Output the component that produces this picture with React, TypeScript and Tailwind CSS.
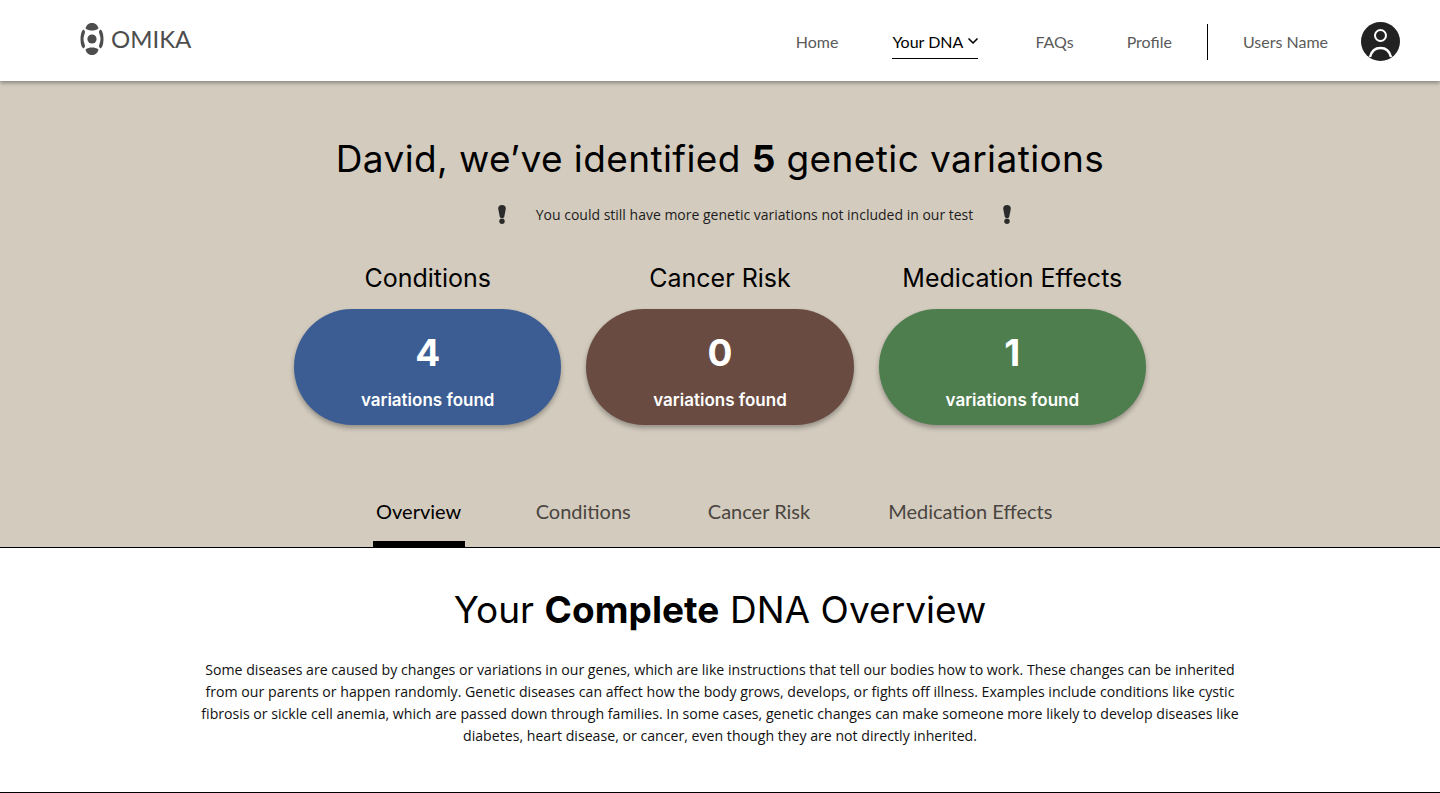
import { ChevronDown } from 'lucide-react';

const navFont = "font-['Lato',sans-serif]";
const headFont = "font-['Inter',sans-serif]";
const bodyFont = "font-['Open_Sans',sans-serif]";

const stats = [
    { title: 'Conditions', count: 4, color: 'bg-[#3b5d93]' },
    { title: 'Cancer Risk', count: 0, color: 'bg-[#694b41]' },
    { title: 'Medication Effects', count: 1, color: 'bg-[#4e7e4e]' },
];

const Logo = () => (
    <svg width="24" height="34" viewBox="0 0 24 34" fill="#4d4d4d">
        <circle cx="12" cy="17" r="4.6" />
        <path d="M5.5 6.5C6.5 2.5 9 1 12 1s5.500 1.500 6.500 5.500C16.500 8 14.500 8.500 12 8.500S7.500 8 5.500 6.500Z" />
        <path d="M5.500 27.500C6.500 31.500 9 33 12 33s5.500-1.500 6.500-5.500C16.500 26 14.500 25.500 12 25.500S7.500 26 5.500 27.500Z" />
        <path d="M3.200 7.500C4.600 8.300 5 9 5 10c0 1.500-1.500 4-1.500 7s1.500 5.500 1.500 7c0 1-.4 1.700-1.800 2.500C1.500 25 .5 21.500.5 17S1.500 9 3.200 7.500Z" />
        <path d="M20.800 7.500C19.400 8.300 19 9 19 10c0 1.500 1.500 4 1.500 7S19 22.500 19 24c0 1 .4 1.700 1.800 2.500 1.700-1.500 2.700-5 2.700-9.500s-1-8-2.700-9.500Z" />
    </svg>
);

const Avatar = () => (
    <svg width="39" height="39" viewBox="0 0 39 39" className="mt-px">
        <circle cx="19.500" cy="19.500" r="19.500" fill="#222222" />
        <circle cx="19.500" cy="13.500" r="5.500" fill="none" stroke="#ffffff" strokeWidth="2" />
        <path d="M9 35c1.500-6 5.500-9 10.500-9s9 3 10.500 9" fill="none" stroke="#ffffff" strokeWidth="2.500" />
    </svg>
);

const Bang = () => (
    <svg width="10" height="19" viewBox="0 0 10 19" fill="#2b2b2b">
        <path d="M5 0c2.400 0 4 1.500 3.800 3.800L7.300 11.500c-.2 1-1 1.500-2.300 1.500s-2.100-.5-2.300-1.500L1.200 3.800C1 1.500 2.600 0 5 0Z" />
        <circle cx="5" cy="16.300" r="2.700" />
    </svg>
);

export default function App() {
    return (
        <div className="h-[793px] bg-white overflow-hidden flex flex-col">
            {/* Top bar */}
            <header className={`relative z-10 h-[81px] shrink-0 bg-white shadow-[0_2px_4px_rgba(0,0,0,0.35)] flex items-center justify-between pl-[80px] pr-[40px] ${navFont}`}>
                <div className="flex items-center gap-[7px] -mt-[3px]">
                    <Logo />
                    <span className="text-[24px] leading-none text-[#4d4d4d]">OMIKA</span>
                </div>
                <nav className="flex items-center text-[16px] text-[#5a5a5a]">
                    <a className="mr-[54px] pt-[2px]">Home</a>
                    <a className="mr-[57px] mt-[4px] h-[33px] w-[86px] border-b border-black text-black flex items-start justify-between pt-[4px]">
                        Your DNA
                        <ChevronDown size={16} strokeWidth={2.5} className="mt-[3px] -mr-[3px]" />
                    </a>
                    <a className="mr-[53px] pt-[2px]">FAQs</a>
                    <a className="pt-[2px]">Profile</a>
                    <div className="w-px h-[36px] bg-black mx-[35px] mt-[2px]" />
                    <a className="mr-[33px] pt-[2px]">Users Name</a>
                    <Avatar />
                </nav>
            </header>

            {/* Summary */}
            <section className="h-[467px] shrink-0 bg-[#d3cbbe] border-b border-black flex flex-col items-center">
                <h1 className={`mt-[53px] text-[37px] leading-[50px] tracking-[0.4px] text-black ${headFont}`}>
                    David, we’ve identified <b className="font-bold">5</b> genetic variations
                </h1>
                <div className={`mt-[20px] ml-[69px] w-[515px] flex items-center justify-between text-[14px] text-[#1c1c1c] ${bodyFont}`}>
                    <Bang />
                    <span>You could still have more genetic variations not included in our test</span>
                    <Bang />
                </div>
                <div className="mt-[35px] flex gap-[25px]">
                    {stats.map((stat) => (
                        <div key={stat.title} className={`w-[267.33px] flex flex-col items-center ${headFont}`}>
                            <h2 className="text-[25px] leading-[36px] text-black whitespace-nowrap">{stat.title}</h2>
                            <div className={`mt-[13px] w-full h-[116px] rounded-[58px] ${stat.color} text-white flex flex-col items-center shadow-[0_3px_5px_rgba(0,0,0,0.3)]`}>
                                <span className="mt-[19px] text-[37px] leading-[50px] font-bold">{stat.count}</span>
                                <span className="mt-[10px] text-[17px] leading-[24px] font-semibold">variations found</span>
                            </div>
                        </div>
                    ))}
                </div>
                <div className={`mt-auto mr-[15px] flex items-start h-[53px] text-[20px] text-[#4a4540] ${navFont}`}>
                    <a className="w-[92px] h-full border-b-[6px] border-black text-black text-center pt-[2px]">Overview</a>
                    <a className="ml-[71px] pt-[2px]">Conditions</a>
                    <a className="ml-[77px] pt-[2px]">Cancer Risk</a>
                    <a className="ml-[78px] pt-[2px]">Medication Effects</a>
                </div>
            </section>

            {/* Overview */}
            <section className="flex-1 bg-white border-b border-black flex flex-col items-center">
                <h2 className={`mt-[37px] text-[37px] leading-[50px] tracking-[0.05px] text-black ${headFont}`}>
                    Your <b className="font-bold">Complete</b> DNA Overview
                </h2>
                <p className={`mt-[24px] w-[1060px] text-center text-[14.15px] leading-[22px] text-[#111111] ${bodyFont}`}>
                    Some diseases are caused by changes or variations in our genes, which are like instructions that tell our bodies how to work. These changes can be inherited from our parents or happen randomly. Genetic diseases can affect how the body grows, develops, or fights off illness. Examples include conditions like cystic fibrosis or sickle cell anemia, which are passed down through families. In some cases, genetic changes can make someone more likely to develop diseases like diabetes, heart disease, or cancer, even though they are not directly inherited.
                </p>
            </section>
        </div>
    );
}
